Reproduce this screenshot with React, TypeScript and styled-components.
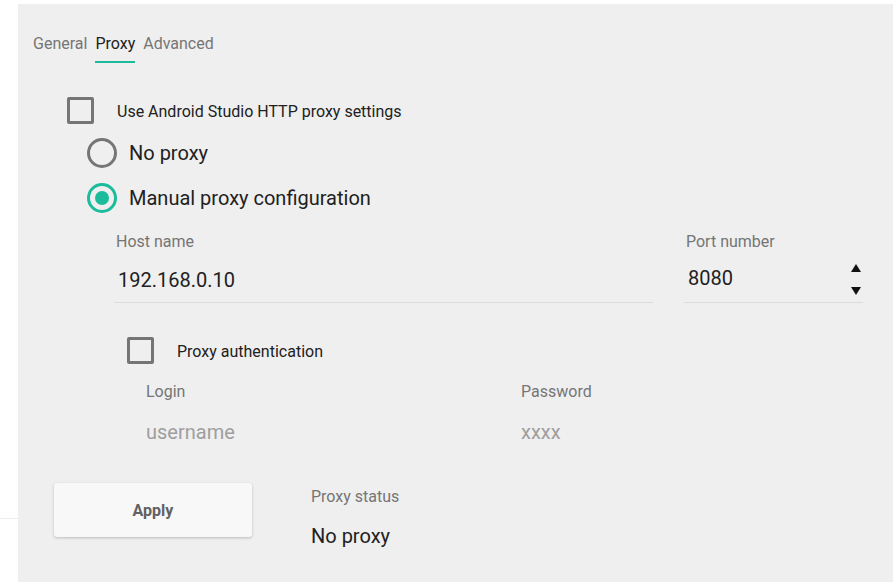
import React from "react";
import styled, { createGlobalStyle } from "styled-components";

const Global = createGlobalStyle`
  html, body { margin: 0; padding: 0; background: #ffffff; }
  body { font-family: Roboto, "Noto Sans", "Liberation Sans", sans-serif; }
  * { box-sizing: border-box; }
`;

const Page = styled.div`
  display: flex;
  width: 894px;
  height: 582px;
  overflow: hidden;
`;

const LeftStrip = styled.div`
  width: 18px;
  flex: none;
`;

const StripTop = styled.div`
  height: 519px;
  border-bottom: 1px solid #ececec;
`;

const Panel = styled.div`
  width: 875px;
  margin-top: 4px;
  height: 578px;
  background: #efefef;
  display: flex;
  flex-direction: column;
`;

const Tabs = styled.div`
  display: flex;
  gap: 8px;
  margin: 30px 0 0 15px;
`;

const Tab = styled.div<{ $active?: boolean }>`
  font-size: 16px;
  line-height: 19px;
  padding-bottom: 8px;
  color: ${(p) => (p.$active ? "#212121" : "#757575")};
  border-bottom: 2px solid ${(p) => (p.$active ? "#1abc9c" : "transparent")};
`;

const CheckRow = styled.label<{ $indent: number; $top: number }>`
  display: flex;
  align-items: center;
  gap: 23px;
  margin-left: ${(p) => p.$indent}px;
  margin-top: ${(p) => p.$top}px;
  font-size: 16px;
  line-height: 19px;
  color: #212121;
`;

const CheckText = styled.span`
  padding-top: 2px;
`;

const Box = styled.span`
  width: 27px;
  height: 27px;
  border: 3px solid #757575;
  border-radius: 2px;
  flex: none;
`;

const RadioGroup = styled.div`
  display: flex;
  flex-direction: column;
  gap: 15px;
  margin: 14px 0 0 69px;
`;

const RadioRow = styled.label`
  display: flex;
  align-items: center;
  gap: 12px;
  font-size: 20px;
  line-height: 24px;
  color: #212121;
  height: 30px;
`;

const Circle = styled.span<{ $on?: boolean }>`
  width: 30px;
  height: 30px;
  border-radius: 50%;
  border: 3px solid ${(p) => (p.$on ? "#1abc9c" : "#757575")};
  display: flex;
  align-items: center;
  justify-content: center;
  flex: none;
`;

const Dot = styled.span`
  width: 14px;
  height: 14px;
  border-radius: 50%;
  background: #1abc9c;
`;

const FieldsRow = styled.div<{ $indent: number; $top: number; $gap: number }>`
  display: flex;
  align-items: flex-start;
  gap: ${(p) => p.$gap}px;
  margin-left: ${(p) => p.$indent}px;
  margin-top: ${(p) => p.$top}px;
`;

const Field = styled.div<{ $width: number; $line?: boolean }>`
  width: ${(p) => p.$width}px;
  display: flex;
  flex-direction: column;
  border-bottom: 1px solid ${(p) => (p.$line ? "#dcdcdc" : "transparent")};
`;

const FieldLabel = styled.div<{ $inset?: number }>`
  font-size: 16px;
  line-height: 18px;
  padding-top: 1px;
  color: #757575;
  padding-left: ${(p) => p.$inset ?? 2}px;
`;

const ValueLine = styled.div<{
  $muted?: boolean;
  $gapTop: number;
  $gapBottom: number;
  $inset?: number;
}>`
  display: flex;
  align-items: center;
  justify-content: space-between;
  height: ${(p) => p.$gapTop + 24 + p.$gapBottom}px;
  font-size: 20px;
  line-height: 24px;
  color: ${(p) => (p.$muted ? "#9e9e9e" : "#212121")};
  padding: ${(p) => p.$gapTop}px 2px ${(p) => p.$gapBottom}px
    ${(p) => p.$inset ?? 4}px;
`;

const Spinner = styled.div`
  display: flex;
  flex-direction: column;
  gap: 15px;
  margin: -2px 0 -5px;
`;

const BottomRow = styled.div`
  display: flex;
  gap: 59px;
  margin: 38px 0 0 36px;
`;

const ApplyButton = styled.button`
  width: 198px;
  height: 54px;
  border: none;
  border-radius: 3px;
  background: #f8f8f8;
  box-shadow: 0 1px 3px rgba(0, 0, 0, 0.22);
  font-family: Roboto, "Noto Sans", "Liberation Sans", sans-serif;
  font-size: 16px;
  font-weight: 700;
  color: #616161;
`;

const Status = styled.div`
  display: flex;
  flex-direction: column;
  gap: 18px;
  margin-top: 4px;
`;

const StatusValue = styled.div`
  font-size: 20px;
  line-height: 24px;
  color: #212121;
`;

const Tri = ({ up }: { up?: boolean }) => (
  <svg width="10" height="8" viewBox="0 0 10 8">
    <polygon points={up ? "5,0 10,8 0,8" : "0,0 10,0 5,8"} fill="#111" />
  </svg>
);

export default function App() {
  return (
    <>
      <Global />
      <Page>
        <LeftStrip>
          <StripTop />
        </LeftStrip>
        <Panel>
          <Tabs>
            <Tab>General</Tab>
            <Tab $active>Proxy</Tab>
            <Tab>Advanced</Tab>
          </Tabs>

          <CheckRow $indent={49} $top={34}>
            <Box />
            <CheckText>Use Android Studio HTTP proxy settings</CheckText>
          </CheckRow>

          <RadioGroup>
            <RadioRow>
              <Circle />
              No proxy
            </RadioRow>
            <RadioRow>
              <Circle $on>
                <Dot />
              </Circle>
              Manual proxy configuration
            </RadioRow>
          </RadioGroup>

          <FieldsRow $indent={96} $top={19} $gap={31}>
            <Field $width={539} $line>
              <FieldLabel>Host name</FieldLabel>
              <ValueLine $gapTop={17} $gapBottom={10}>
                192.168.0.10
              </ValueLine>
            </Field>
            <Field $width={179} $line>
              <FieldLabel>Port number</FieldLabel>
              <ValueLine $gapTop={15} $gapBottom={12}>
                8080
                <Spinner>
                  <Tri up />
                  <Tri />
                </Spinner>
              </ValueLine>
            </Field>
          </FieldsRow>

          <CheckRow $indent={109} $top={34}>
            <Box />
            <CheckText>Proxy authentication</CheckText>
          </CheckRow>

          <FieldsRow $indent={126} $top={18} $gap={0}>
            <Field $width={375}>
              <FieldLabel $inset={2}>Login</FieldLabel>
              <ValueLine $muted $gapTop={19} $gapBottom={0} $inset={2}>
                username
              </ValueLine>
            </Field>
            <Field $width={200}>
              <FieldLabel $inset={2}>Password</FieldLabel>
              <ValueLine $muted $gapTop={19} $gapBottom={0} $inset={2}>
                xxxx
              </ValueLine>
            </Field>
          </FieldsRow>

          <BottomRow>
            <ApplyButton>Apply</ApplyButton>
            <Status>
              <FieldLabel $inset={0}>Proxy status</FieldLabel>
              <StatusValue>No proxy</StatusValue>
            </Status>
          </BottomRow>
        </Panel>
      </Page>
    </>
  );
}
